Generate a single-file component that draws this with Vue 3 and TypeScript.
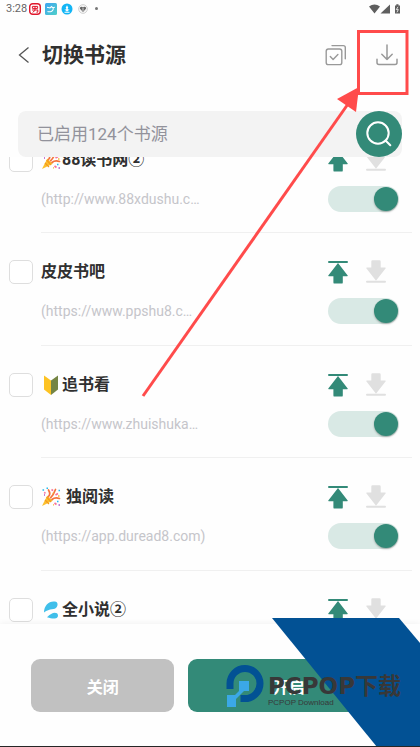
<script setup lang="ts">
import { ref } from 'vue'

type Emoji = 'party' | 'leaf' | 'drops' | null

interface Source {
  id: number
  emoji: Emoji
  spaced: boolean
  name: string
  url: string
  selected: boolean
  enabled: boolean
}

const query = ref('')
const sources = ref<Source[]>([
  { id: 1, emoji: 'party', spaced: false, name: '88读书网②', url: '(http://www.88xdushu.c…', selected: false, enabled: true },
  { id: 2, emoji: null, spaced: false, name: '皮皮书吧', url: '(https://www.ppshu8.c…', selected: false, enabled: true },
  { id: 3, emoji: 'leaf', spaced: false, name: '追书看', url: '(https://www.zhuishuka…', selected: false, enabled: true },
  { id: 4, emoji: 'party', spaced: true, name: '独阅读', url: '(https://app.duread8.com)', selected: false, enabled: true },
  { id: 5, emoji: 'drops', spaced: false, name: '全小说②', url: '', selected: false, enabled: true },
])
</script>

<template>
  <div class="screen">
    <div class="status">
      <span class="clock">3:28</span>
      <svg class="app" viewBox="0 0 12 12"><rect x=".7" y=".7" width="10.600" height="10.600" rx="3" fill="#fff" stroke="#e0182d" stroke-width="1.4" /><path d="M3.400 3.400h5.200v2H3.400zM3 7h6M6 3v4.400L3.600 9.400M8.800 7v2.200H7.400" fill="none" stroke="#e0182d" stroke-width="1" /></svg>
      <svg class="app" viewBox="0 0 12 12"><defs><linearGradient id="sky" x2="1" y2="1"><stop stop-color="#3fa4f2" /><stop offset="1" stop-color="#4fd0c8" /></linearGradient></defs><rect width="12" height="12" rx="1.5" fill="url(#sky)" /><path d="M2 4.300l3 .7 1.600-1.400 1.200 1.300 2-.6M2.500 8.500c2.500.7 5.500 0 6-3" fill="none" stroke="#fff" stroke-width="1.1" /></svg>
      <svg class="app" viewBox="0 0 12 12"><circle cx="6" cy="6" r="5.5" fill="#12b5f5" /><path d="M6 2.2L7.4 5H4.6zM5.2 4.8h1.6v2H5.2zM3.4 6.5h5.2L6 8.6zM3.5 8.8h5v1h-5z" fill="#fff" /></svg>
      <svg class="app" viewBox="0 0 12 12"><circle cx="6" cy="6" r="4.4" fill="#f4f4f4" stroke="#c9c9c9" stroke-width=".8" /><path d="M6 9L3 5.8C2.4 3.6 5 3 6 4.6 7 3 9.600 3.600 9 5.800z" fill="#666" /><path d="M6 5v3" stroke="#fff" stroke-width=".7" /></svg>
      <span class="dot"></span>
      <svg class="signals" viewBox="0 0 32 10"><path d="M0 2.500Q5.500-1.500 11 2.500L5.500 9.500zM21 .5v9h-9.500zM26 1.500h1.300V.3h2.200v1.200H31v8h-5z" fill="#5f5f5f" /><path d="M29 2.800L27.300 5.600h2L28 8.300" fill="none" stroke="#fff" stroke-width=".8" /></svg>
    </div>

    <header class="header">
      <button class="icon-button back" aria-label="返回">
        <svg width="12" height="18" viewBox="0 0 12 18"><path d="M10.500 1.500L1.500 9l9 7.500" fill="none" stroke="#555" stroke-width="1.300" /></svg>
      </button>
      <h1>切换书源</h1>
      <button class="icon-button" aria-label="全选">
        <svg width="22" height="22" viewBox="0 0 22 22" fill="none" stroke="#999" stroke-width="1.400" stroke-linecap="round" stroke-linejoin="round"><rect x="1.200" y="5" width="15.600" height="15.600" rx="2.200" /><path d="M7 1.600h11.300q2 0 2 2v11.200M5.300 12.600l2.800 3 4.800-5" /></svg>
      </button>
      <button class="icon-button download" aria-label="导入">
        <svg width="22" height="22" viewBox="0 0 22 22" fill="none" stroke="#999" stroke-width="1.500" stroke-linecap="round" stroke-linejoin="round"><path d="M11 1v14.400M5.800 10.300l5.200 5.200 5.200-5.200M1 15.200v3.300q0 2 2 2h16q2 0 2-2v-3.300" /></svg>
      </button>
    </header>

    <form class="search" @submit.prevent>
      <input v-model="query" type="text" aria-label="搜索书源" placeholder="已启用124个书源" />
      <button type="submit" aria-label="搜索">
        <svg width="26" height="26" viewBox="0 0 26 26" fill="none" stroke="#fff" stroke-width="2" stroke-linecap="round"><circle cx="12" cy="12" r="10.700" /><path d="M19.500 19.500l4.800 4.800" /></svg>
      </button>
    </form>

    <ul class="list">
      <li v-for="source in sources" :key="source.id" class="row">
        <input :id="`pick-${source.id}`" v-model="source.selected" class="pick" type="checkbox" />
        <div class="body">
          <div class="line">
            <label class="name" :for="`pick-${source.id}`">
              <svg v-if="source.emoji === 'party'" class="emoji" viewBox="0 0 20 20">
                <path d="M1 19L6.300 8.500l5.400 5.300z" fill="#fbc02d" /><path d="M4 13l4 4M5.600 10l4.500 5" stroke="#f59a1b" stroke-width="1.200" />
                <path d="M7.500 9.500Q10 7 7.500 3M9.700 10.600Q12.500 8 14.500 2.500M11 12.500q3-2.500 7.500-1" fill="none" stroke="#f4733d" stroke-width="1.700" stroke-linecap="round" />
                <path d="M10.500 2.500l1.600 1.200M3.200 5.400l1.300 1M14.500 8l2.500-1.500M13.500 16l2 1.500" stroke="#f7719a" stroke-width="1.600" />
                <path d="M1.500 3h1.600M5.500 1.300h1.500M17.500 3.500h1.500M16 14.500h1.500" stroke="#27b9ed" stroke-width="1.600" />
                <path d="M11.500 6.500h1M17 9h1.500M12 17.800h1" stroke="#f2b632" stroke-width="1.300" /><path d="M3 8h1M17.500 18h1.500" stroke="#b855c4" stroke-width="1.500" />
              </svg>
              <svg v-else-if="source.emoji === 'leaf'" class="emoji" viewBox="0 0 20 20"><path d="M3 .5L10 5.500V20L3 14.500z" fill="#fdc323" /><path d="M17 .5L10 5.500V20l7-5.500z" fill="#758544" /></svg>
              <svg v-else-if="source.emoji === 'drops'" class="emoji" viewBox="0 0 20 20"><path d="M3 12.500C3 5 9 0 15.500 2q2 2 .3 5c-2 3.500-7 .8-12.800 5.500zM6 17.200c4-3.800 7-5.500 10-4 1.800 1.800 1 4.500-1 5-2.500.7-5 .2-9-1z" fill="#40bfea" /></svg>
              <span :class="{ spaced: source.spaced }">{{ source.name }}</span>
            </label>
            <div class="tools">
              <button class="icon-button" aria-label="置顶">
                <svg width="20" height="24" viewBox="0 0 20 24" fill="#338a78"><rect y="1" width="20" height="2" rx="1" /><path d="M10 3l9.700 12.500q.4.700-.5.700H14.800v6.200q0 1.200-1.200 1.200H6.600q-1.200 0-1.200-1.200v-6.200H.8q-.9 0-.5-.7z" /></svg>
              </button>
              <button class="icon-button" aria-label="置底">
                <svg width="20" height="24" viewBox="0 0 20 24" fill="#e0e0e0"><rect y="20.700" width="20" height="2" rx="1" /><path d="M10 20.700L.3 8.300q-.4-.7.500-.7H5.300V1.500q0-1.200 1.200-1.200h7q1.200 0 1.200 1.200v6.100h4.500q.9 0 .5.700z" /></svg>
              </button>
            </div>
          </div>
          <div class="line second">
            <span class="url">{{ source.url }}</span>
            <input v-model="source.enabled" class="switch" type="checkbox" role="switch" :aria-label="source.name" />
          </div>
        </div>
      </li>
    </ul>

    <footer class="footer">
      <button class="close">关闭</button>
      <button class="enable">开启</button>
    </footer>

    <svg class="arrow" width="420" height="400" viewBox="0 0 420 400" aria-hidden="true">
      <path d="M143 396L348 104" stroke="#ff4b4b" stroke-width="3" />
      <path d="M359 87l-3 25-19-13z" fill="#ff4b4b" />
      <rect x="358.500" y="31.500" width="48.500" height="62" fill="none" stroke="#ff4b4b" stroke-width="3" />
    </svg>

    <div class="watermark">
      <svg class="band" viewBox="0 0 148 129" aria-hidden="true"><path d="M0 0h127l21 25v104H105z" fill="#025194" /></svg>
      <div class="brand">
        <svg width="38" height="43" viewBox="0 0 38 43" aria-hidden="true">
          <path d="M4 24v-5.500a15 15 0 1 1 15 15h-4.500" fill="none" stroke="#025194" stroke-width="7" />
          <path d="M13 16h10v10h-5l-8 8v8H1V30h8l4-4z" fill="#3ba8e6" />
        </svg>
        <div class="brand-text"><strong>PCPOP下载</strong><small>PCPOP Download</small></div>
      </div>
    </div>
  </div>
</template>

<style>
body {
  background: #fefefe;
}
</style>

<style scoped>
.screen {
  position: relative;
  display: flex;
  flex-direction: column;
  box-sizing: border-box;
  height: 100vh;
  overflow: hidden;
  border-bottom: 1px solid #262626;
  background: #fefefe;
  color: #303030;
  font-family: Roboto, "Noto Sans CJK SC", sans-serif;
}
button,
input {
  margin: 0;
  padding: 0;
  border: 0;
  font-family: inherit;
}
svg {
  display: block;
}
.status {
  display: flex;
  align-items: center;
  gap: 4px;
  height: 17px;
  padding: 0 19px 0 6px;
}
.clock {
  margin-right: -2px;
  color: #666;
  font-size: 11px;
  line-height: 17px;
}
.app {
  width: 12px;
  height: 12px;
}
.dot {
  width: 3px;
  height: 3px;
  margin-left: 2px;
  border-radius: 50%;
  background: #777;
}
.signals {
  width: 32px;
  height: 10px;
  margin-left: auto;
}
.header {
  display: flex;
  align-items: center;
  height: 76px;
  padding: 0 22px 0 18px;
}
.icon-button {
  display: block;
  background: none;
}
.back {
  margin-right: 12px;
}
h1 {
  flex: 1;
  margin: 0;
  font-size: 21px;
  line-height: 32px;
  font-weight: 700;
}
.download {
  margin-left: 29px;
}
.search {
  display: flex;
  flex: none;
  height: 46px;
  margin: 18px 18px 0;
  border-radius: 8px;
  background: #f3f3f3;
}
.search input {
  flex: 1;
  min-width: 0;
  padding-left: 19px;
  outline: 0;
  background: none;
  color: #303030;
  font-size: 17px;
}
.search input::placeholder {
  color: #92929b;
}
.search button {
  display: grid;
  place-items: center;
  width: 46px;
  border-radius: 50%;
  background: #338a78;
}
.list {
  flex: 1;
  min-height: 0;
  margin: 0;
  padding: 0 8px 0 9px;
  overflow: hidden;
  list-style: none;
}
.row {
  display: flex;
  gap: 8px;
}
.row:first-child {
  margin-top: -36px;
}
.pick {
  flex: none;
  box-sizing: border-box;
  width: 24px;
  height: 24px;
  margin-top: 27px;
  border: 1px solid #dedede;
  border-radius: 5px;
  appearance: none;
  background: #fff;
}
.pick:checked {
  background: #338a78;
}
.body {
  flex: 1;
  min-width: 0;
  padding: 27px 13px 20px 0;
  border-bottom: 1px solid #f0f0f0;
}
.row:nth-child(even) .body {
  padding-bottom: 21px;
}
.line {
  display: flex;
  align-items: center;
  justify-content: space-between;
  height: 24px;
}
.second {
  height: 26px;
  margin-top: 14px;
}
.name {
  display: flex;
  align-items: center;
  gap: 1px;
  font-size: 16px;
  line-height: 24px;
  font-weight: 700;
}
.spaced {
  margin-left: 4px;
}
.emoji {
  width: 20px;
  height: 20px;
}
.tools {
  display: flex;
  gap: 18px;
  width: 71px;
}
.url {
  color: #c5c5ca;
  font-size: 14px;
  line-height: 20px;
}
.switch {
  box-sizing: border-box;
  width: 71px;
  height: 26px;
  padding: 1px;
  border-radius: 13px;
  appearance: none;
  background: #e4e4e4;
}
.switch::before {
  display: block;
  width: 24px;
  height: 24px;
  border-radius: 50%;
  background: #fff;
  box-shadow: 0 1px 2px rgb(0 0 0 / 30%);
  content: "";
}
.switch:checked {
  background: #d9e9e5;
}
.switch:checked::before {
  margin-left: auto;
  background: #338a78;
}
.footer {
  display: flex;
  flex: none;
  gap: 14px;
  padding: 35px 31px 34px;
  background: #fefefe;
  box-shadow: 0 -1px 6px rgb(0 0 0 / 5%);
}
.footer button {
  height: 53px;
  border-radius: 9px;
  color: #fff;
  font-size: 16px;
  font-weight: 700;
}
.footer .close {
  flex: 5;
  background: #c1c1c1;
}
.footer .enable {
  flex: 7;
  background: #338a78;
}
.arrow {
  position: absolute;
  top: 0;
  right: 0;
  pointer-events: none;
}
.watermark {
  position: absolute;
  right: 0;
  bottom: -1px;
  width: 194px;
  height: 129px;
  pointer-events: none;
}
.band {
  width: 148px;
  height: 129px;
  margin-left: auto;
}
.brand {
  position: absolute;
  top: 47px;
  left: 0;
  display: flex;
  gap: 4px;
}
.brand-text {
  display: flex;
  flex-direction: column;
  padding-top: 9px;
  color: #383838;
  white-space: nowrap;
}
.brand-text strong {
  font-family: "DejaVu Sans", "Noto Sans CJK SC", sans-serif;
  font-size: 23px;
  line-height: 24px;
}
.brand-text small {
  font-family: "Liberation Sans", sans-serif;
  font-size: 8px;
  line-height: 10px;
}
</style>
